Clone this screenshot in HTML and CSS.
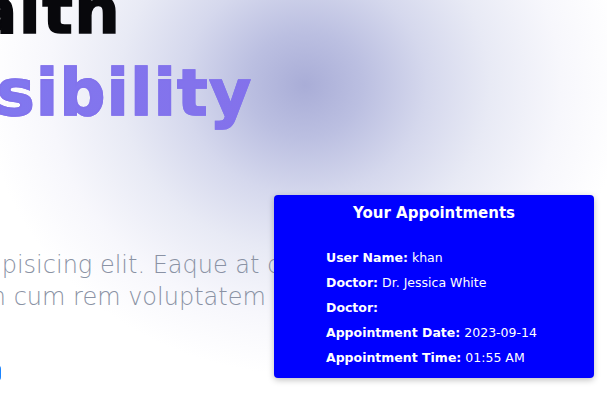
FILE: index.html
```html
<!DOCTYPE html>
<html lang="en">
<head>
<meta charset="utf-8">
<title>Appointments</title>
<link rel="stylesheet" href="styles.css">
</head>
<body>
<main class="hero">
  <div class="hero-text">
    <h1 class="headline">
      <span class="line line-dark">In Health</span>
      <span class="line line-grad">Accessibility</span>
    </h1>
    <p class="lead">Lorem ipsum dolor sit amet consectetur adipisicing elit. Eaque at dolor<br>Quisquam, dolorum minus ipsam quos illum cum rem voluptatem numquam.</p>
    <a class="cta" href="#">Book now</a>
  </div>
</main>
<section class="appointments">
  <h2 class="appt-title">Your Appointments</h2>
  <ul class="appt-list">
    <li><b>User Name:</b> khan</li>
    <li><b>Doctor:</b> Dr. Jessica White</li>
    <li><b>Doctor:</b></li>
    <li><b>Appointment Date:</b> 2023-09-14</li>
    <li><b>Appointment Time:</b> 01:55 AM</li>
  </ul>
</section>
</body>
</html>
```
FILE: styles.css
```css
html, body {
  margin: 0;
  padding: 0;
  width: 607px;
  height: 401px;
  overflow: hidden;
}
body {
  font-family: "DejaVu Sans", "Liberation Sans", sans-serif;
  background:
    radial-gradient(ellipse 320px 290px at 305px 85px, #a9add7 0%, #bbbfe1 18%, #d5d8ed 38%, #e8eaf5 58%, #f7f7fc 80%, #ffffff 100%),
    #ffffff;
  position: relative;
}
.hero {
  display: flex;
}
.hero-text {
  margin-left: -218px;
  width: 900px;
  flex: none;
}
.headline {
  margin: -30px 0 0 0;
  font-family: "DejaVu Sans", sans-serif;
  font-weight: 700;
  font-size: 64px;
  line-height: 82px;
  letter-spacing: 1.5px;
  white-space: nowrap;
}
.line {
  display: block;
}
.line-dark {
  color: #08080c;
  -webkit-text-stroke: 1.6px #08080c;
  margin-left: -4px;
}
.line-grad {
  background: linear-gradient(90deg, #7a7ff6 0%, #8276ee 30%, #8470ea 60%, #7a5fdc 100%);
  -webkit-background-clip: text;
  background-clip: text;
  color: transparent;
  -webkit-text-stroke: 1.6px #8273ec;
}
.lead {
  margin: 115px 0 0 -305px;
  font-family: "DejaVu Sans", sans-serif;
  font-weight: 200;
  font-size: 24px;
  line-height: 32px;
  color: #8a92a4;
  white-space: nowrap;
}
.cta {
  display: block;
  margin-top: 52px;
  background: #1a84ff;
  border-radius: 4px;
  width: 219px;
  height: 16px;
  color: transparent;
  font-size: 1px;
}
.appointments {
  position: absolute;
  left: 274px;
  top: 195px;
  width: 320px;
  height: 183px;
  box-sizing: border-box;
  background: #0000ff;
  border-radius: 4px;
  box-shadow: 0 2px 6px rgba(0, 0, 0, 0.25);
  color: #ffffff;
  padding: 8px 0 0 52px;
}
.appt-title {
  margin: 0 0 0 -52px;
  text-align: center;
  font-size: 15px;
  font-weight: 700;
  line-height: 20px;
}
.appt-list {
  list-style: none;
  margin: 22px 0 0 0;
  padding: 0;
  font-size: 12.5px;
  line-height: 25px;
}
.appt-list b {
  font-weight: 700;
}
```
